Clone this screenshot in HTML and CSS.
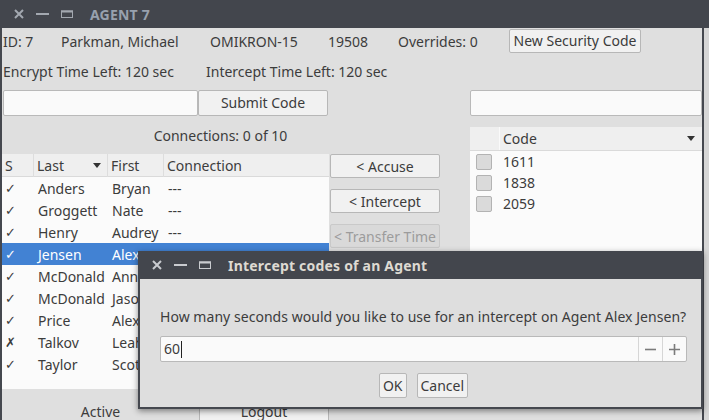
FILE: index.html
```html
<!DOCTYPE html>
<html>
<head>
<meta charset="utf-8">
<link rel="stylesheet" href="styles.css">
</head>
<body>
<div class="screen">
  <div class="titlebar">
    <span class="wbtns">
      <svg class="wi wi-x" width="12" height="12" viewBox="0 0 12 12"><path d="M2 2L10 10M10 2L2 10" stroke="currentColor" stroke-width="2"/></svg>
      <svg class="wi wi-min" width="13" height="12" viewBox="0 0 13 12"><path d="M0 6H13" stroke="currentColor" stroke-width="2"/></svg>
      <svg class="wi wi-max" width="12" height="12" viewBox="0 0 12 12"><rect x="0.5" y="3" width="11" height="6.5" fill="none" stroke="currentColor" stroke-width="1"/><rect x="0" y="2.5" width="12" height="2" fill="currentColor"/></svg>
    </span>
    <span class="title">AGENT 7</span>
  </div>
  <div class="desk">
    <div class="window">
      <div class="info">
        <span>ID: 7</span>
        <span>Parkman, Michael</span>
        <span>OMIKRON-15</span>
        <span>19508</span>
        <span>Overrides: 0</span>
        <button class="btn btn-code">New Security Code</button>
      </div>
      <div class="timers">
        <span>Encrypt Time Left: 120 sec</span>
        <span>Intercept Time Left: 120 sec</span>
      </div>
      <div class="cols">
        <div class="left">
          <div class="submit">
            <div class="field field-code"></div>
            <button class="btn btn-submit">Submit Code</button>
          </div>
          <div class="conn">Connections: 0 of 10</div>
          <div class="agents">
            <div class="thead">
              <div class="th">S</div>
              <div class="th th-sort">Last<span class="arrow"></span></div>
              <div class="th">First</div>
              <div class="th">Connection</div>
            </div>
            <div class="tr"><div class="td mark">✓</div><div class="td">Anders</div><div class="td">Bryan</div><div class="td">---</div></div>
            <div class="tr"><div class="td mark">✓</div><div class="td">Groggett</div><div class="td">Nate</div><div class="td">---</div></div>
            <div class="tr"><div class="td mark">✓</div><div class="td">Henry</div><div class="td">Audrey</div><div class="td">---</div></div>
            <div class="tr sel"><div class="td mark">✓</div><div class="td">Jensen</div><div class="td">Alex</div><div class="td">---</div></div>
            <div class="tr"><div class="td mark">✓</div><div class="td">McDonald</div><div class="td">Anna</div><div class="td">---</div></div>
            <div class="tr"><div class="td mark">✓</div><div class="td">McDonald</div><div class="td">Jason</div><div class="td">---</div></div>
            <div class="tr"><div class="td mark">✓</div><div class="td">Price</div><div class="td">Alex</div><div class="td">---</div></div>
            <div class="tr"><div class="td mark">✗</div><div class="td">Talkov</div><div class="td">Leah</div><div class="td">---</div></div>
            <div class="tr"><div class="td mark">✓</div><div class="td">Taylor</div><div class="td">Scott</div><div class="td">---</div></div>
          </div>
          <div class="bottom">
            <span class="active">Active</span>
            <button class="btn btn-logout">Logout</button>
          </div>
        </div>
        <div class="mid">
          <button class="btn btn-side">&lt; Accuse</button>
          <button class="btn btn-side">&lt; Intercept</button>
          <button class="btn btn-side" disabled>&lt; Transfer Time</button>
        </div>
        <div class="right">
          <div class="field field-right"></div>
          <div class="codes">
            <div class="chead">
              <div class="ch ch-box"></div>
              <div class="ch ch-code">Code<span class="arrow"></span></div>
            </div>
            <div class="crow"><span class="cb"></span><span>1611</span></div>
            <div class="crow"><span class="cb"></span><span>1838</span></div>
            <div class="crow"><span class="cb"></span><span>2059</span></div>
          </div>
        </div>
      </div>
    </div>
    <div class="behind"></div>
  </div>

  <div class="dialog">
    <div class="titlebar dtitle">
      <span class="wbtns">
        <svg class="wi wi-x" width="12" height="12" viewBox="0 0 12 12"><path d="M2 2L10 10M10 2L2 10" stroke="currentColor" stroke-width="2"/></svg>
        <svg class="wi wi-min" width="13" height="12" viewBox="0 0 13 12"><path d="M0 6H13" stroke="currentColor" stroke-width="2"/></svg>
        <svg class="wi wi-max" width="12" height="12" viewBox="0 0 12 12"><rect x="0.5" y="3" width="11" height="6.5" fill="none" stroke="currentColor" stroke-width="1"/><rect x="0" y="2.5" width="12" height="2" fill="currentColor"/></svg>
      </span>
      <span class="title">Intercept codes of an Agent</span>
    </div>
    <div class="dbody">
      <div class="question">How many seconds would you like to use for an intercept on Agent Alex Jensen?</div>
      <div class="spin">
        <div class="spin-val">60<span class="caret"></span></div>
        <div class="spin-btn">
          <svg width="11" height="11" viewBox="0 0 11 11"><path d="M0 5.5H11" stroke="currentColor" stroke-width="1.6"/></svg>
        </div>
        <div class="spin-btn">
          <svg width="11" height="11" viewBox="0 0 11 11"><path d="M0 5.5H11M5.5 0V11" stroke="currentColor" stroke-width="1.6"/></svg>
        </div>
      </div>
      <div class="dbtns">
        <button class="btn btn-ok">OK</button>
        <button class="btn btn-cancel">Cancel</button>
      </div>
    </div>
  </div>
</div>
</body>
</html>
```

FILE: styles.css
```css
* { box-sizing: border-box; }

html, body {
  margin: 0;
  padding: 0;
}

body {
  width: 709px;
  height: 420px;
  overflow: hidden;
  font-family: "Noto Sans", "DejaVu Sans", sans-serif;
  font-size: 14px;
  color: #3c3c3c;
}

.screen {
  position: relative;
  width: 709px;
  height: 420px;
  overflow: hidden;
  background: #dcdcdc;
}

/* title bars */
.titlebar {
  height: 28px;
  background: #43464d;
  display: flex;
  align-items: center;
  padding-left: 13px;
}

.wbtns {
  display: flex;
  align-items: center;
  color: #a3a8b0;
}

.wi { display: block; }
.wi-x { margin-right: 11px; }
.wi-min { margin-right: 12px; }
.wi-max { margin-right: 17px; }

.title {
  font-weight: bold;
  font-size: 14px;
  color: #98a1ae;
  letter-spacing: 0.2px;
}

/* main window */
.desk {
  display: flex;
  height: 392px;
}

.window {
  width: 704px;
  height: 392px;
  background: #dfdfdf;
  border-left: 2px solid #45484f;
  border-right: 2px solid #45484f;
}

.behind {
  flex: 1;
  background: #d6d6d6;
}

.info {
  display: grid;
  grid-template-columns: 58px 149px 118px 70px 111px auto;
  align-items: center;
  height: 26px;
  padding-left: 1px;
  padding-top: 1px;
}

.timers {
  display: grid;
  grid-template-columns: 203px auto;
  align-items: center;
  height: 34px;
  padding-left: 1px;
  padding-top: 1px;
}

.btn {
  font-family: inherit;
  font-size: 14px;
  color: #3c3c3c;
  background: #f1f1f1;
  border: 1px solid #b7b7b7;
  border-radius: 2px;
  padding: 0;
  margin: 0;
  height: 26px;
  line-height: 22px;
}

.btn:disabled {
  color: #9c9c9c;
  background: #d9d9d9;
  border-color: #c9c9c9;
}

.btn-code {
  width: 132px;
  height: 24px;
  justify-self: start;
  margin-top: -1px;
}

.cols {
  display: flex;
  align-items: flex-start;
}

.left {
  width: 327px;
  display: flex;
  flex-direction: column;
}

.submit {
  display: flex;
  margin-top: 2px;
  padding-left: 1px;
}

.field {
  background: #fafafa;
  border: 1px solid #b9b9b9;
  border-radius: 2px;
  height: 26px;
}

.field-code { width: 195px; }
.btn-submit { width: 130px; }

.conn {
  width: 437px;
  height: 38px;
  line-height: 40px;
  text-align: center;
}

/* agents table */
.agents {
  height: 235px;
  background: #fbfbfb;
}

.thead, .tr {
  display: grid;
  grid-template-columns: 32px 74px 56px 1fr;
}

.thead {
  height: 23px;
  background: #efefef;
  border-bottom: 1px solid #dadada;
}

.th {
  padding-left: 3px;
  line-height: 23px;
  border-right: 1px solid #dddddd;
}

.th:last-child { border-right: none; }

.th-sort {
  display: flex;
  align-items: center;
  justify-content: space-between;
  padding-right: 6px;
}

.arrow {
  width: 0;
  height: 0;
  border-left: 4px solid transparent;
  border-right: 4px solid transparent;
  border-top: 5px solid #333;
}

.tr { height: 22px; line-height: 23px; }

.td {
  padding-left: 4px;
  white-space: nowrap;
  overflow: hidden;
}

.mark {
  font-family: "DejaVu Sans", sans-serif;
  font-size: 13px;
  padding-left: 3px;
}

.tr.sel {
  background: #4282d3;
  color: #ffffff;
}

.bottom {
  display: flex;
  margin-top: 10px;
}

.active {
  width: 197px;
  text-align: center;
  line-height: 26px;
}

.btn-logout { width: 130px; }

/* middle buttons */
.mid {
  width: 110px;
  margin-left: 1px;
  padding-top: 66px;
  display: flex;
  flex-direction: column;
  gap: 11px;
}

.btn-side {
  width: 110px;
  height: 24px;
  line-height: 23px;
}

/* right column */
.right {
  width: 232px;
  margin-left: 30px;
  margin-top: 2px;
  display: flex;
  flex-direction: column;
}

.field-right { width: 232px; }

.codes {
  margin-top: 11px;
  background: #fbfbfb;
  height: 270px;
}

.chead {
  display: flex;
  height: 24px;
  background: #efefef;
  border-bottom: 1px solid #dadada;
}

.ch-box {
  width: 30px;
  border-right: 1px solid #fafafa;
}

.ch-code {
  flex: 1;
  display: flex;
  align-items: center;
  justify-content: space-between;
  padding-left: 3px;
  padding-right: 7px;
}

.crow {
  display: flex;
  align-items: center;
  height: 21px;
  gap: 11px;
  padding-left: 6px;
}

.cb {
  width: 16px;
  height: 16px;
  background: #dadada;
  border: 1px solid #b3b3b3;
  border-radius: 2px;
}

/* dialog */
.dialog {
  position: absolute;
  left: 138px;
  top: 251px;
  width: 565px;
  height: 158px;
  background: #dedede;
  border: 2px solid #45484f;
  border-top: none;
  box-shadow: 0 2px 6px rgba(0, 0, 0, 0.45);
}

.dtitle {
  margin-left: -2px;
  margin-right: -2px;
  padding-left: 13px;
}

.dtitle .wbtns { color: #c9cbcf; }
.dtitle .title { color: #dedad2; }

.dbody {
  padding: 28px 14px 0 20px;
}

.question {
  line-height: 20px;
  white-space: nowrap;
  letter-spacing: 0.04px;
}

.spin {
  display: flex;
  margin-top: 9px;
  width: 527px;
  height: 26px;
  background: #fafafa;
  border: 1px solid #b9b9b9;
  border-radius: 2px;
}

.spin-val {
  flex: 1;
  line-height: 24px;
  padding-left: 3px;
  display: flex;
  align-items: center;
}

.caret {
  width: 1px;
  height: 17px;
  background: #222;
  margin-left: 1px;
}

.spin-btn {
  width: 24px;
  border-left: 1px solid #d6d6d6;
  display: flex;
  align-items: center;
  justify-content: center;
  color: #7b7b7b;
}

.dbtns {
  display: flex;
  justify-content: center;
  gap: 10px;
  margin-top: 11px;
}

.btn-ok, .btn-cancel {
  height: 25px;
  padding: 0 3px;
}
```
